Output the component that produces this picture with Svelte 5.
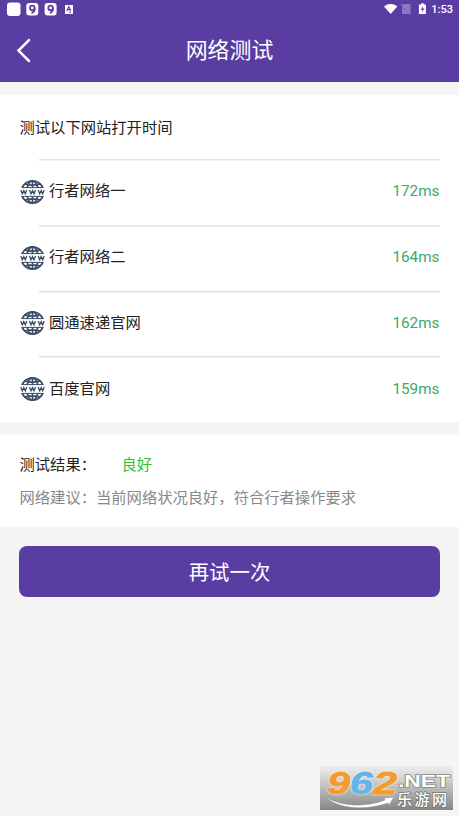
<script lang="ts">
  interface Site {
    name: string;
    time: number;
  }

  let sites: Site[] = [
    { name: '行者网络一', time: 172 },
    { name: '行者网络二', time: 164 },
    { name: '圆通速递官网', time: 162 },
    { name: '百度官网', time: 159 }
  ];
</script>

<div class="page">
  <header>
    <div class="status">
      <div class="notices">
        <svg width="67" height="18" viewBox="0 0 67 18">
          <rect x="0" y="2.5" width="13.5" height="13.5" rx="3" fill="#fff" />
          <rect x="19.3" y="3" width="12" height="12.5" rx="3" fill="#fff" />
          <rect x="37.6" y="3" width="12" height="12.5" rx="3" fill="#fff" />
          <g fill="none" stroke="#5a3da3" stroke-width="1.8">
            <circle cx="25.3" cy="7.9" r="2.3" />
            <path d="M27.6 7.7c.3 3-.9 4.8-3.1 5.3" />
            <circle cx="43.6" cy="7.9" r="2.3" />
            <path d="M45.9 7.7c.3 3-.9 4.8-3.1 5.3" />
          </g>
          <rect x="58" y="5" width="8" height="9" fill="#fff" />
          <path d="M59.8 11l2-4.400 2 4.400M60.800 9.600h2M62 12.300h2" fill="none" stroke="#5a3da3" stroke-width="1.1" />
        </svg>
      </div>
      <div class="system">
        <svg width="45" height="18" viewBox="0 0 45 18">
          <path d="M1 6.500C4.800 3.200 10.500 3.200 14.300 6.500L7.700 14z" fill="#fff" />
          <path d="M21 4h6.500v8.500L19.500 5.500zM19 6.300l8.300 7.700H19z" fill="#8d78c0" />
          <path d="M18 4l10 9.800" stroke="#a898d0" stroke-width="1" />
          <path d="M38.200 3.300h2.500v1.200h2.200v9.400h-7V4.500h2.300z" fill="#fff" />
          <path d="M40.200 5.800l-2.500 4h1.700l-.5 2.700 2.600-4h-1.800z" fill="#5a3da3" />
        </svg>
        <span>1:53</span>
      </div>
    </div>
    <div class="navbar">
      <svg class="back" width="16" height="26" viewBox="0 0 16 26">
        <path d="M13 2.200L2.500 12.600 13 23" fill="none" stroke="#fff" stroke-width="2.5" stroke-linecap="round" />
      </svg>
      <h1>网络测试</h1>
    </div>
  </header>

  <section class="sites">
    <h2>测试以下网站打开时间</h2>
    {#each sites as site}
      <div class="site">
        <svg class="globe" width="25" height="26" viewBox="0 0 25 26">
          <g fill="none" stroke="#3d4d68" stroke-width="1.7">
            <circle cx="12.5" cy="13" r="11.2" />
            <ellipse cx="12.5" cy="13" rx="5.8" ry="11.2" />
            <path d="M12.5 1.500v23M4.500 5q8 2.400 16 0M4.500 21q8-2.400 16 0" />
          </g>
          <rect x="0" y="9" width="25" height="8" fill="#fff" />
          <path d="M3 8.600h19M3 17.400h19" stroke="#3d4d68" stroke-width="1" />
          <g fill="none" stroke="#3d4d68" stroke-width="1.3">
            <path d="M.8 10.900l1.500 3.900 1.500-3.300 1.500 3.300 1.500-3.900" />
            <path d="M9.500 10.900l1.500 3.900 1.500-3.300 1.500 3.300 1.500-3.900" />
            <path d="M18.200 10.900l1.500 3.900 1.500-3.300 1.500 3.300 1.500-3.900" />
          </g>
        </svg>
        <span class="name">{site.name}</span>
        <span class="time">{site.time}ms</span>
      </div>
    {/each}
  </section>

  <section class="result">
    <p><span class="label">测试结果：</span><span class="good">良好</span></p>
    <p class="advice">网络建议：当前网络状况良好，符合行者操作要求</p>
  </section>

  <button>再试一次</button>

  <div class="watermark">
    <svg width="133" height="44" viewBox="0 0 133 44">
      <defs>
        <linearGradient id="plate" x1="0" y1="0" x2="0" y2="1">
          <stop offset="0" stop-color="#eeeeee" />
          <stop offset=".5" stop-color="#bdbdbd" />
          <stop offset="1" stop-color="#858585" />
        </linearGradient>
      </defs>
      <rect width="133" height="44" fill="url(#plate)" />
      <path d="M6 31c14 9 38 11 59 3l-1-2 10-1-5 8-1-2C46 45 17 43 6 31z" fill="#fff" stroke="#888" stroke-width=".5" />
      <g class="digits">
        <text x="7" y="28" textLength="23" lengthAdjust="spacingAndGlyphs" fill="#f59a2f" stroke="#f59a2f">9</text>
        <text x="30" y="28" textLength="23" lengthAdjust="spacingAndGlyphs" fill="#62b5e8" stroke="#62b5e8">6</text>
        <text x="53" y="28" textLength="24" lengthAdjust="spacingAndGlyphs" fill="#f59a2f" stroke="#f59a2f">2</text>
      </g>
      <text class="net" x="78" y="21" textLength="52" lengthAdjust="spacingAndGlyphs">.NET</text>
      <text class="cn" x="77" y="39" textLength="50">乐游网</text>
    </svg>
  </div>
</div>

<style>
  :global(body) {
    background: #f5f5f5;
  }

  .page {
    position: relative;
    box-sizing: border-box;
    height: 816px;
    overflow: hidden;
    color: #222;
    font-family: Roboto, "Noto Sans CJK SC", sans-serif;
    font-size: 15.3px;
  }

  header {
    height: 82px;
    margin-bottom: 13px;
    background: #5a3da3;
    color: #fff;
  }

  .status {
    display: flex;
    justify-content: space-between;
    height: 19px;
    padding: 0 6px 0 7px;
  }

  .notices svg {
    display: block;
  }

  .system {
    display: flex;
    gap: 3px;
    font-size: 11px;
    font-weight: 500;
    line-height: 19px;
  }

  .navbar {
    display: grid;
    grid-template-columns: 40px 1fr 40px;
    align-items: center;
    height: 63px;
  }

  .back {
    margin-left: 16px;
  }

  h1 {
    margin: 0;
    font-size: 21.9px;
    font-weight: 400;
    line-height: 63px;
    text-align: center;
  }

  .sites {
    height: 327px;
    margin-bottom: 13px;
    background: #fff;
  }

  h2 {
    box-sizing: border-box;
    height: 64px;
    margin: 0;
    padding: 1px 0 0 19.5px;
    font-size: 15.3px;
    font-weight: 400;
    line-height: 64px;
  }

  .site {
    display: flex;
    align-items: center;
    box-sizing: border-box;
    height: 65.8px;
    padding: 0 19.5px;
    line-height: 63px;
    background: linear-gradient(#e2e2e2, #e2e2e2) 39px 0 / 401px 1.5px no-repeat;
  }

  .globe {
    flex: none;
    margin-right: 4.5px;
  }

  .name {
    flex: 1;
  }

  .time {
    color: #3fa863;
    font-size: 15.3px;
  }

  .result {
    box-sizing: border-box;
    height: 92px;
    margin-bottom: 19px;
    padding: 14px 19.5px;
    background: #fff;
  }

  .result p {
    margin: 0;
    line-height: 32px;
  }

  .label {
    display: inline-block;
    width: 102px;
  }

  .good {
    color: #32c132;
  }

  .result .advice {
    padding-top: 1px;
    color: #888;
  }

  button {
    display: block;
    width: 421px;
    height: 51px;
    margin: 0 19px;
    padding: 0 0 1px;
    border: 0;
    border-radius: 8px;
    background: #5a3da3;
    color: #fff;
    font-family: inherit;
    font-size: 20.4px;
  }

  .watermark {
    position: absolute;
    right: 6px;
    bottom: 6px;
    height: 44px;
  }

  .watermark svg {
    overflow: visible;
  }

  .digits {
    font: italic bold 32px "Liberation Sans", sans-serif;
    stroke-width: 0.8px;
    filter: drop-shadow(0 0 1px #fff);
  }

  .net {
    font: bold 17px "Liberation Sans", sans-serif;
    fill: #fff;
    stroke: #888;
    stroke-width: 1.5px;
    paint-order: stroke;
  }

  .cn {
    font: 500 15px "Noto Sans CJK SC", sans-serif;
    fill: #fff;
    stroke: #777;
    stroke-width: 1.5px;
    paint-order: stroke;
  }
</style>
